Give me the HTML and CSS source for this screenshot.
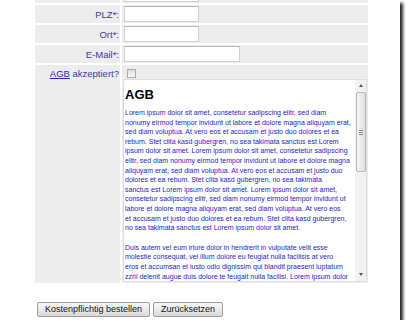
FILE: index.html
```html
<!DOCTYPE html>
<html lang="de">
<head>
  <meta charset="UTF-8">
  <title>Bestellung</title>
  <link rel="stylesheet" href="styles.css">
</head>
<body>
  <div class="window">
    <form class="order-form">
      <table class="form-table">
        <tr>
          <td class="label">Nr.*:</td>
          <td class="field"><input type="text" class="txt"></td>
        </tr>
        <tr>
          <td class="label">PLZ*:</td>
          <td class="field"><input type="text" class="txt"></td>
        </tr>
        <tr>
          <td class="label">Ort*:</td>
          <td class="field"><input type="text" class="txt"></td>
        </tr>
        <tr>
          <td class="label">E-Mail*:</td>
          <td class="field"><input type="text" class="txt txt-long"></td>
        </tr>
        <tr>
          <td class="label label-top"><a href="#" class="agb-link">AGB</a> akzeptiert?</td>
          <td class="field field-agb">
            <input type="checkbox" class="check">
            <div class="agb-box">
              <div class="agb-text">
                <h2>AGB</h2>
                <p>Lorem ipsum dolor sit amet, consetetur sadipscing elitr, sed diam<br>
                nonumy eirmod tempor invidunt ut labore et dolore magna aliquyam erat,<br>
                sed diam voluptua. At vero eos et accusam et justo duo dolores et ea<br>
                rebum. Stet clita kasd gubergren, no sea takimata sanctus est Lorem<br>
                ipsum dolor sit amet. Lorem ipsum dolor sit amet, consetetur sadipscing<br>
                elitr, sed diam nonumy eirmod tempor invidunt ut labore et dolore magna<br>
                aliquyam erat, sed diam voluptua. At vero eos et accusam et justo duo<br>
                dolores et ea rebum. Stet clita kasd gubergren, no sea takimata<br>
                sanctus est Lorem ipsum dolor sit amet. Lorem ipsum dolor sit amet,<br>
                consetetur sadipscing elitr, sed diam nonumy eirmod tempor invidunt ut<br>
                labore et dolore magna aliquyam erat, sed diam voluptua. At vero eos<br>
                et accusam et justo duo dolores et ea rebum. Stet clita kasd gubergren,<br>
                no sea takimata sanctus est Lorem ipsum dolor sit amet.</p>
                <p>Duis autem vel eum iriure dolor in hendrerit in vulputate velit esse<br>
                molestie consequat, vel illum dolore eu feugiat nulla facilisis at vero<br>
                eros et accumsan et iusto odio dignissim qui blandit praesent luptatum<br>
                zzril delenit augue duis dolore te feugait nulla facilisi. Lorem ipsum dolor</p>
              </div>
              <div class="scrollbar">
                <span class="arrow arrow-up"></span>
                <span class="thumb"><span class="grip"></span></span>
                <span class="track"></span>
                <span class="arrow arrow-down"></span>
              </div>
            </div>
          </td>
        </tr>
      </table>
      <div class="buttons">
        <button type="submit" class="btn">Kostenpflichtig bestellen</button>
        <button type="reset" class="btn">Zurücksetzen</button>
      </div>
    </form>
  </div>
</body>
</html>
```

FILE: styles.css
```css
body {
  margin: 0;
  background: #fff;
  font-family: 'Liberation Sans', Arial, sans-serif;
}
.window {
  width: 400px;
  height: 320px;
  background: #fff;
  overflow: hidden;
  box-shadow: 3px 3px 3px rgba(0,0,0,0.85);
}
.form-table {
  margin: -17px 0 0 33px;
  border-collapse: separate;
  border-spacing: 2px;
}
.form-table td {
  background: #ececec;
  padding: 0;
}
.label {
  width: 84px;
  height: 18px;
  padding-right: 1px !important;
  text-align: right;
  font-size: 9.5px;
  color: #3a3a9c;
  white-space: nowrap;
}
.label-top {
  vertical-align: top;
  padding-top: 3px !important;
}
.agb-link {
  color: #2626c8;
}
.field {
  width: 242px;
  padding: 1px 2px !important;
}
.txt {
  display: block;
  box-sizing: border-box;
  width: 75px;
  height: 16px;
  margin: 0;
  border: 1px solid #cfcfcf;
  border-top-color: #b4b4b4;
  background: #fff;
}
.txt-long {
  width: 116px;
}
.field-agb {
  padding: 0 1px 1px 1px !important;
  vertical-align: top;
}
.check {
  -webkit-appearance: none;
  appearance: none;
  display: block;
  width: 9px;
  height: 9px;
  margin: 4px 0 1px 4px;
  border: 1px solid #a8a8a8;
  background: linear-gradient(#dcdcdc, #fafafa);
}
.agb-box {
  display: flex;
  height: 203px;
  box-sizing: border-box;
  border: 1px solid #dcdcdc;
  background: #fff;
}
.agb-text {
  flex: 1;
  overflow: hidden;
  padding: 7px 0 0 1px;
  color: #1c1cc8;
  font-size: 7px;
  line-height: 9.6px;
  white-space: nowrap;
}
.agb-text h2 {
  margin: 0 0 6px 0;
  color: #000;
  font-size: 13px;
  line-height: 15px;
}
.agb-text p {
  margin: 0 0 10px 0;
}
.scrollbar {
  width: 11px;
  flex: none;
  display: flex;
  flex-direction: column;
  align-items: center;
  background: #f1f1f1;
}
.arrow {
  display: block;
  width: 0;
  height: 0;
  border-left: 2.5px solid transparent;
  border-right: 2.5px solid transparent;
}
.arrow-up {
  margin: 4px 0 5px 0;
  border-bottom: 3px solid #555;
}
.arrow-down {
  margin: 0 0 5px 0;
  border-top: 3px solid #555;
}
.thumb {
  display: flex;
  align-items: center;
  justify-content: center;
  box-sizing: border-box;
  width: 10px;
  height: 80px;
  border: 1px solid #b9b9b9;
  border-radius: 2px;
  background: linear-gradient(to right, #f6f6f6, #dedede);
}
.grip {
  width: 4px;
  height: 5px;
  background: repeating-linear-gradient(#8c8c8c 0 1px, transparent 1px 2px);
}
.track {
  flex: 1;
}
.buttons {
  display: flex;
  gap: 3px;
  margin: 17px 0 0 37px;
}
.btn {
  height: 15px;
  padding: 0 7px;
  border: 1px solid #9c9c9c;
  border-radius: 2px;
  background: linear-gradient(#f8f8f8, #dadada);
  color: #111;
  font-family: 'Liberation Sans', Arial, sans-serif;
  font-size: 9px;
  line-height: 13px;
}
```
